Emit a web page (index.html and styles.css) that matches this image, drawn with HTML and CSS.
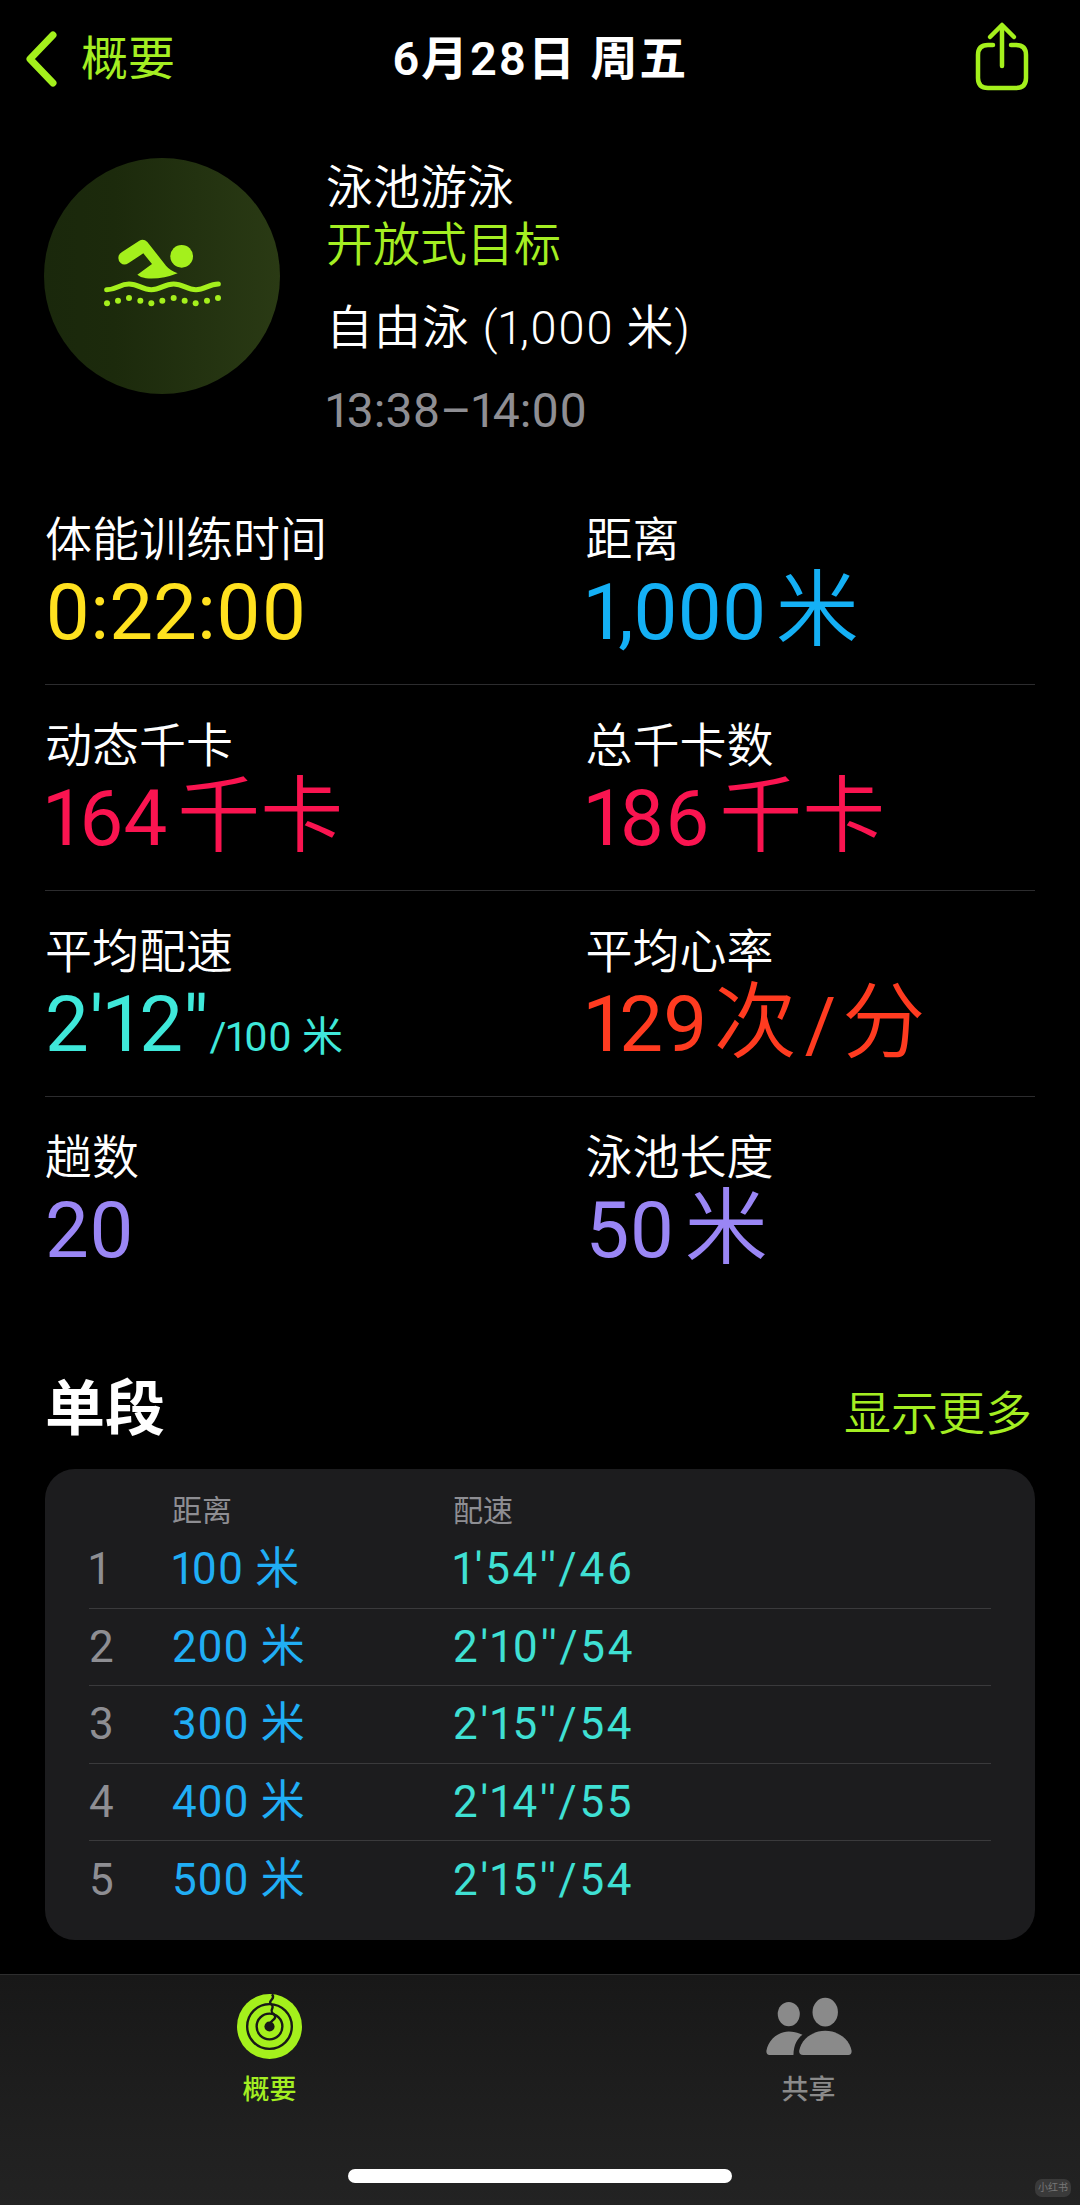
FILE: index.html
```html
<!DOCTYPE html>
<html lang="zh-CN">
<head>
<meta charset="utf-8">
<title>体能训练详情</title>
<link rel="stylesheet" href="styles.css">
</head>
<body>
<div class="page">
  <main class="main">
    <header class="nav">
      <div class="back">
        <svg class="chevron" viewBox="0 0 34 56"><path d="M29 4 L6 28 L29 52"/></svg>
        <span>概要</span>
      </div>
      <h1 class="title">6月28日 周五</h1>
      <div class="nav-end">
        <svg class="share" viewBox="0 0 60 74"><path d="M22 26 H17 Q7 26 7 36 V59 Q7 69 17 69 H45 Q55 69 55 59 V36 Q55 26 45 26 H40"/><path d="M31 47 V7"/><path d="M19 18 L31 6 L43 18"/></svg>
      </div>
    </header>

    <section class="summary">
      <div class="badge">
        <svg class="swim" viewBox="0 0 780 780">
          <circle class="g" cx="455" cy="322" r="34"/>
          <path class="g" d="M265 327 Q265 315 276 309 L328 275 Q341 268 352 279 L408 350 Q420 364 443 373 Q395 392 348 388 Q332 386 322 377 L366 345 L340 313 L296 342 Q282 351 272 342 Q265 336 265 327 Z"/>
          <path class="wave" d="M230 422 C262 422 268 405 297 405 C326 405 336 422 364 422 C392 422 402 405 431 405 C460 405 470 422 498 422 C526 422 536 405 565 405"/>
          <g class="g">
            <circle cx="231" cy="463" r="9"/><circle cx="264" cy="455" r="9"/><circle cx="297" cy="447" r="9"/><circle cx="331" cy="455" r="9"/><circle cx="364" cy="463" r="9"/><circle cx="397" cy="455" r="9"/><circle cx="431" cy="447" r="9"/><circle cx="464" cy="455" r="9"/><circle cx="497" cy="463" r="9"/><circle cx="531" cy="455" r="9"/><circle cx="564" cy="447" r="9"/>
          </g>
        </svg>
      </div>
      <div class="info">
        <div class="info-line">泳池游泳</div>
        <div class="info-line green">开放式目标</div>
        <div class="info-line info-sub">自由泳 (1,000 米)</div>
        <div class="info-line info-time">13:38–14:00</div>
      </div>
    </section>

    <section class="stats">
      <div class="stat-row">
        <div class="stat"><div class="label">体能训练时间</div><div class="value yellow">0:22:00</div></div>
        <div class="stat"><div class="label">距离</div><div class="value blue">1,000<span class="unit">米</span></div></div>
      </div>
      <div class="stat-row">
        <div class="stat"><div class="label">动态千卡</div><div class="value pink">164<span class="unit">千卡</span></div></div>
        <div class="stat"><div class="label">总千卡数</div><div class="value pink">186<span class="unit">千卡</span></div></div>
      </div>
      <div class="stat-row">
        <div class="stat"><div class="label">平均配速</div><div class="value teal"><span class="pace-big">2'12''</span><span class="small">/100 米</span></div></div>
        <div class="stat"><div class="label">平均心率</div><div class="value red">129<span class="unit unit-rate">次</span><span class="slash">/</span><span class="unit unit-tail">分</span></div></div>
      </div>
      <div class="stat-row stat-row-last">
        <div class="stat"><div class="label">趟数</div><div class="value purple">20</div></div>
        <div class="stat"><div class="label">泳池长度</div><div class="value purple">50<span class="unit">米</span></div></div>
      </div>
    </section>

    <section class="splits">
      <div class="splits-head">
        <h2 class="splits-title">单段</h2>
        <span class="more">显示更多</span>
      </div>
      <div class="card">
        <div class="card-head"><span></span><span>距离</span><span>配速</span></div>
        <div class="split"><span class="num">1</span><span class="dist">100 <span class="mi">米</span></span><span class="pace">1'54''/46</span></div>
        <div class="split"><span class="num">2</span><span class="dist">200 <span class="mi">米</span></span><span class="pace">2'10''/54</span></div>
        <div class="split"><span class="num">3</span><span class="dist">300 <span class="mi">米</span></span><span class="pace">2'15''/54</span></div>
        <div class="split"><span class="num">4</span><span class="dist">400 <span class="mi">米</span></span><span class="pace">2'14''/55</span></div>
        <div class="split split-last"><span class="num">5</span><span class="dist">500 <span class="mi">米</span></span><span class="pace">2'15''/54</span></div>
      </div>
    </section>
  </main>

  <footer class="tabbar">
    <div class="tabs">
      <div class="tab tab-on">
        <svg class="tab-icon" viewBox="49 12 192 192">
          <circle class="ring-fill" cx="145" cy="108" r="96"/>
          <circle class="ring-line" cx="145" cy="108" r="66"/>
          <circle class="ring-line" cx="145" cy="108" r="38"/>
          <circle class="ring-hole" cx="145" cy="108" r="15"/>
          <path class="ring-line" d="M152 13 C166 26 138 32 150 42 C164 52 140 60 158 72 C170 84 150 90 148 98"/>
        </svg>
        <span class="tab-label">概要</span>
      </div>
      <div class="tab">
        <svg class="tab-icon tab-icon-wide" viewBox="40 30 275 190">
          <ellipse class="person" cx="117" cy="88" rx="33" ry="36"/>
          <ellipse class="person" cx="226" cy="82" rx="38" ry="43"/>
          <path class="person" d="M160 210 Q148 210 148 198 C155 160 190 138 226 138 C262 138 298 160 305 198 Q305 210 295 210 Z"/>
          <path class="person" d="M60 210 Q50 210 50 198 C56 165 85 140 117 140 C132 140 147 144 158 150 C142 162 132 180 131 210 Z"/>
        </svg>
        <span class="tab-label">共享</span>
      </div>
    </div>
    <div class="home-bar"></div>
    <div class="mark">小红书</div>
  </footer>
</div>
</body>
</html>
```

FILE: styles.css
```css
* { box-sizing: border-box; }
html, body { margin: 0; padding: 0; background: #000; }
body {
  font-family: Roboto, "Noto Sans CJK SC", sans-serif;
  font-variant-numeric: proportional-nums;
  color: #fff;
}
.page {
  width: 1080px;
  height: 2205px;
  display: flex;
  flex-direction: column;
  overflow: hidden;
}
.main { flex: 1; }

/* nav */
.nav {
  height: 118px;
  display: grid;
  grid-template-columns: 1fr auto 1fr;
  align-items: center;
  padding: 0 49px;
}
.back {
  display: flex;
  align-items: center;
  gap: 23px;
  margin-left: -25px;
  font-size: 47px;
  line-height: 56px;
  color: #a4ee22;
}
.chevron { width: 34px; height: 56px; flex: none; }
.chevron path { fill: none; stroke: #a4f01c; stroke-width: 7; stroke-linecap: round; stroke-linejoin: round; }
.title {
  margin: 0;
  font-size: 47px;
  line-height: 56px;
  font-weight: 600;
  letter-spacing: 1.800px;
  white-space: nowrap;
}
.nav-end { display: flex; justify-content: flex-end; align-self: start; padding-top: 19px; }
.share { width: 60px; height: 74px; }
.share path { fill: none; stroke: #a4f01c; stroke-width: 4.500; stroke-linecap: round; stroke-linejoin: round; }

/* summary */
.summary {
  display: flex;
  gap: 46px;
  padding: 40px 0 0 44px;
  height: 361px;
}
.badge {
  width: 236px;
  height: 236px;
  border-radius: 50%;
  flex: none;
  background: linear-gradient(90deg, #1a280c 0%, #1c2a0c 30%, #2a3a14 100%);
  overflow: hidden;
}
.swim { width: 260px; height: 260px; display: block; margin: -9px 0 0 -14px; }
.g { fill: #a4f01c; }
.wave { fill: none; stroke: #a4f01c; stroke-width: 15; stroke-linecap: round; }
.info { padding-top: 1px; }
.info-line { font-size: 47px; line-height: 57px; white-space: nowrap; font-weight: 350; }
.green { color: #a4ee22; }
.info-sub { margin-top: 26px; letter-spacing: 1px; }
.info-time { margin-top: 26px; color: #8e8e93; font-size: 48px; font-weight: 400; }

/* stats */
.stats { padding: 0 45px; }
.stat-row {
  height: 206px;
  display: grid;
  grid-template-columns: 540.500px 1fr;
  padding: 31px 0 0 0;
  border-bottom: 1px solid #2c2c2e;
}
.stat-row-last { border-bottom: 0; }
.label { font-size: 47px; line-height: 60px; font-weight: 350; white-space: nowrap; }
.value {
  font-size: 78px;
  line-height: 86px;
  font-weight: 400;
  white-space: nowrap;
}
.unit {
  font-size: 83px;
  line-height: 0;
  margin-left: 10px;
  font-weight: 350;
  font-family: "Noto Sans CJK SC", sans-serif;
}
.unit-rate { margin-left: 6px; }
.unit-tail { margin-left: 0; }
.slash { font-size: 76px; line-height: 0; margin: 0 6px 0 8px; }
.pace-big { letter-spacing: 1px; }
.small { font-size: 41px; line-height: 0; }
.yellow { color: #ffe11f; }
.blue { color: #14b0f5; letter-spacing: -1px; }
.pink { color: #fa1450; }
.teal { color: #3fe8da; }
.red { color: #ff3b20; }
.purple { color: #9a86f5; }

/* splits */
.splits { padding: 0 45px; }
.splits-head {
  height: 166px;
  display: flex;
  align-items: center;
  justify-content: space-between;
  padding: 47px 3px 0 0;
}
.splits-title { margin: 0; font-size: 60px; line-height: 70px; font-weight: 700; }
.more { font-size: 47px; line-height: 60px; color: #a4ee22; margin-top: 9px; font-weight: 350; }
.card {
  background: #1c1c1e;
  border-radius: 30px;
  height: 471px;
  padding: 21px 44px 0;
}
.card-head, .split {
  display: grid;
  grid-template-columns: 83px 281px 1fr;
  align-items: center;
}
.card-head { height: 41px; font-size: 30px; line-height: 41px; color: #8e8e93; }
.split {
  height: 77.500px;
  font-size: 44px;
  line-height: 60px;
  white-space: nowrap;
  border-bottom: 1px solid #3a3a3c;
}
.split-last { border-bottom: 0; }
.num { color: #8e8e93; }
.dist { color: #20aef5; letter-spacing: 0.500px; }
.mi { line-height: 0; }
.pace { color: #3fe0d4; letter-spacing: 2.700px; }

/* tabbar */
.tabbar {
  position: relative;
  height: 231px;
  flex: none;
  background: linear-gradient(180deg, #181818 0%, #232323 100%);
  border-top: 1px solid #2e2e2e;
  display: flex;
  flex-direction: column;
  align-items: center;
}
.tabs {
  width: 100%;
  display: grid;
  grid-template-columns: 539px 539px;
  padding-top: 19px;
}
.tab { display: flex; flex-direction: column; align-items: center; color: #8a8a8a; }
.tab-on { color: #a4ee22; }
.tab-icon { width: 65px; height: 65px; display: block; }
.tab-icon-wide { width: 92px; }
.tab-label { font-size: 27px; line-height: 36px; margin-top: 13px; font-weight: 500; }
.ring-fill { fill: #a4f01c; }
.ring-line { fill: none; stroke: #181818; stroke-width: 7; }
.ring-hole { fill: #181818; }
.person { fill: #8a8a8a; }
.home-bar {
  width: 384px;
  height: 14px;
  border-radius: 7px;
  background: #fff;
  margin-top: 61px;
}
.mark {
  position: absolute;
  right: 9px;
  bottom: 8px;
  width: 36px;
  height: 18px;
  border-radius: 7px;
  background: #3a3a3a;
  color: #777;
  font-size: 10px;
  line-height: 18px;
  text-align: center;
  white-space: nowrap;
}
```
